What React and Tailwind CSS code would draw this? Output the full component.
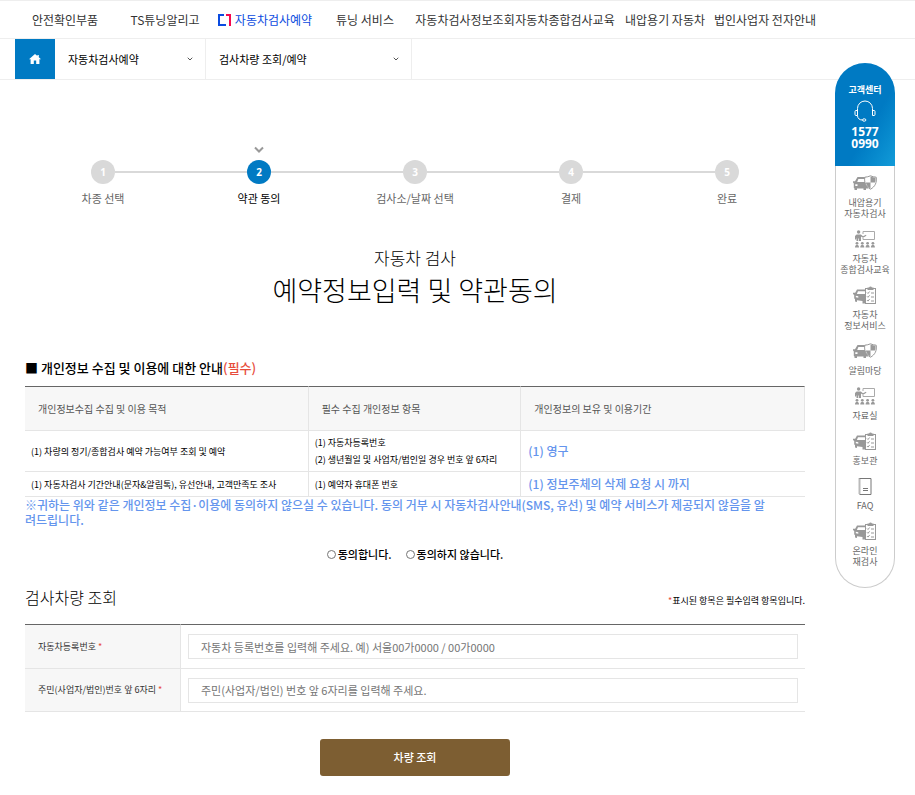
import { useState } from 'react';
import { ChevronDown } from 'lucide-react';

const NAV_ITEMS = [
  '안전확인부품',
  'TS튜닝알리고',
  '자동차검사예약',
  '튜닝 서비스',
  '자동차검사정보조회',
  '자동차종합검사교육',
  '내압용기 자동차',
  '법인사업자 전자안내',
];

const STEPS = ['차종 선택', '약관 동의', '검사소/날짜 선택', '결제', '완료'];

const BracketMark = () => (
  <svg viewBox="0 0 13 12" className="w-[13px] h-3 shrink-0" fill="none" strokeWidth="2">
    <path d="M6 1H1v10h7" stroke="#0a4be0" />
    <path d="M8 1h4v11" stroke="#f5094f" />
  </svg>
);

const HomeIcon = () => (
  <svg viewBox="0 0 12 10" className="w-3 h-2.5" fill="#fff">
    <path d="M6 0 0 5.2h1.6V10h3.2V6.6h2.4V10h3.2V5.2H12L9.8 3.3V1H8.4v1.1z" />
  </svg>
);

const HeadsetIcon = () => (
  <svg viewBox="0 0 22 22" className="w-[22px] h-[22px]" fill="none" stroke="#fff" strokeWidth="1">
    <path d="M3.5 11V8.500a7.500 7.500 0 0 1 15 0V11" />
    <path d="M3.5 10.500H2a1 1 0 0 0-1 1v3a1 1 0 0 0 1 1h1.500zM18.500 10.500H20a1 1 0 0 1 1 1v3a1 1 0 0 1-1 1h-1.500z" />
    <path d="M3.500 15.500c0 3 2 4.500 5 4.500" />
    <ellipse cx="10.200" cy="20" rx="1.700" ry="1.200" />
  </svg>
);

const CarShieldIcon = () => (
  <svg viewBox="0 0 24 16" className="w-6 h-4" fill="#999">
    <path
      fillRule="evenodd"
      d="M4.500 2H14v2H5.400L4.200 7H15v6.500h-2V15h-2.500v-1.500H4V15H1.500v-1.500L.8 13V8.500L0 7.600V6.200h2zM2.300 9.300V11h2.200V9.300z"
    />
    <path
      d="M17.500.8c1.800.9 3.600 1.200 5.700 1.400.9 5.200-1.200 9.600-5.700 12-4.500-2.400-6.600-6.800-5.700-12 2.100-.2 3.900-.5 5.700-1.400z"
      fill="#fff"
      stroke="#999"
    />
    <path d="M17.500 1.500c1.600.8 3.200 1.100 5 1.200.2 1.800.1 3.300-.4 4.700h-4.600zM17.500 7.400v6.100c-2.500-1.500-4.100-3.500-4.700-6.100z" />
  </svg>
);

const LectureIcon = () => (
  <svg viewBox="0 0 20 18" className="w-5 h-[18px]" fill="#999">
    <path d="M8 4V1.500h11.500v8H8V8" fill="none" stroke="#aaa" />
    <circle cx="3.600" cy="2" r="1.700" />
    <path d="M1.600 4.400h4.200L8 6.200l3-1.400.4.900L8 7.800 6 6.500V11H4V8.500h-.7V11H1.500V7.500L1 9.500H0V6z" />
    <circle cx="2" cy="13.300" r="1.400" />
    <circle cx="7.300" cy="13.300" r="1.400" />
    <circle cx="12.600" cy="13.300" r="1.400" />
    <circle cx="17.900" cy="13.300" r="1.400" />
    <path d="M0 17.500c0-1.800.8-2.400 2-2.400s2 .6 2 2.400zM5.300 17.500c0-1.800.8-2.400 2-2.400s2 .6 2 2.400zM10.600 17.500c0-1.800.8-2.400 2-2.400s2 .6 2 2.400zM15.900 17.500c0-1.800.8-2.400 2-2.400s2 .6 2 2.400z" />
  </svg>
);

const CarChecklistIcon = () => (
  <svg viewBox="0 0 24 18" className="w-6 h-[18px]" fill="#999">
    <path
      fillRule="evenodd"
      d="M4 3.500h8v1.700H5L3.900 8H12v9.500H9.500V15L4 14.200V16L2 15.500V13l-.8-.6V9L0 8V6.800h2.200zM2.800 9.700v1.600l2.500.4v-1.500z"
    />
    <rect x="12.500" y="2.500" width="10" height="15" fill="#fff" stroke="#999" />
    <path d="M14.500 1.500H16C16.500.2 18.500.2 19 1.500h1.500V4h-6z" />
    <path
      d="m14 6.500 1 1 1.600-2M14 10.300l1 1 1.600-2M14 14.100l1 1 1.600-2M18 7h3M18 11h3M18 15h3"
      fill="none"
      stroke="#999"
    />
  </svg>
);

const NotebookIcon = () => (
  <svg viewBox="0 0 14 17" className="w-3.5 h-[17px]" fill="none" stroke="#777">
    <path d="M1.500 .5h11.500v16H1.500" />
    <path d="M1.500 .5v16" strokeWidth="2" strokeDasharray="1 1" />
    <path d="M5 10.500h5M5 12.500h5" />
  </svg>
);

const QUICK_LINKS = [
  { icon: CarShieldIcon, lines: ['내압용기', '자동차검사'] },
  { icon: LectureIcon, lines: ['자동차', '종합검사교육'] },
  { icon: CarChecklistIcon, lines: ['자동차', '정보서비스'] },
  { icon: CarShieldIcon, lines: ['알림마당'] },
  { icon: LectureIcon, lines: ['자료실'] },
  { icon: CarChecklistIcon, lines: ['홍보관'] },
  { icon: NotebookIcon, lines: ['FAQ'] },
  { icon: CarChecklistIcon, lines: ['온라인', '재검사'] },
];

const CrumbSelect = ({ label, value, className }) => (
  <div className={`relative border-r border-[#eee] ${className}`}>
    <select
      aria-label={label}
      className="w-full h-10 pl-[13px] pr-8 appearance-none bg-white text-[11px] text-black outline-none"
    >
      <option>{value}</option>
    </select>
    <ChevronDown className="absolute right-[11px] top-4 w-2 h-2 text-[#555] pointer-events-none" strokeWidth={3} />
  </div>
);

const QuickMenu = () => (
  <aside className="absolute right-5 top-[63px] w-[60px] text-center">
    <div className="h-[103px] pt-[21px] flex flex-col items-center rounded-t-[30px] text-white bg-linear-to-br from-[#007ac3] from-60% to-[#129bd8]">
      <span className="text-[9px] leading-3 font-bold">고객센터</span>
      <div className="mt-1">
        <HeadsetIcon />
      </div>
      <strong className="mt-1 text-xs leading-3 font-bold font-['Open_Sans',sans-serif]">
        1577
        <br />
        0990
      </strong>
    </div>
    <ul className="pt-[7px] pb-5 flex flex-col gap-2.5 rounded-b-[30px] border border-t-0 border-[#ccc] bg-white">
      {QUICK_LINKS.map(({ icon: Icon, lines }) => (
        <li key={lines.join(' ')}>
          <a href="#" className="flex flex-col items-center text-[9px] leading-[11px] text-[#666] whitespace-nowrap">
            <span className="h-5 mb-1 flex items-center">
              <Icon />
            </span>
            {lines.map((line) => (
              <span key={line}>{line}</span>
            ))}
          </a>
        </li>
      ))}
    </ul>
  </aside>
);

const StepList = ({ current }) => (
  <ol className="pt-[65px] grid grid-cols-5">
    {STEPS.map((step, i) => {
      const active = i + 1 === current;
      return (
        <li key={step} className="flex flex-col items-center">
          <span className="h-[15px]">
            {active && (
              <svg viewBox="0 0 10 9" className="w-2.5 h-[9px]" fill="none" stroke="#999" strokeWidth="2">
                <path d="m1 2.500 4 4 4-4" />
              </svg>
            )}
          </span>
          <div className="w-full flex items-center">
            <span className={`h-0.5 flex-1 ${i === 0 ? '' : 'bg-[#d9d9d9]'}`} />
            <span
              className={`w-6 h-6 rounded-full flex items-center justify-center text-[10px] font-bold text-white font-['Open_Sans',sans-serif] ${
                active ? 'bg-[#007ac3]' : 'bg-[#d9d9d9]'
              }`}
            >
              {i + 1}
            </span>
            <span className={`h-0.5 flex-1 ${i === STEPS.length - 1 ? '' : 'bg-[#d9d9d9]'}`} />
          </div>
          <span className={`mt-1.5 text-[11px] leading-4 ${active ? 'text-black' : 'text-[#666]'}`}>{step}</span>
        </li>
      );
    })}
  </ol>
);

const ConsentTable = () => (
  <table className="w-full table-fixed border-separate border-spacing-0 text-left text-[9px] leading-[17px] text-black">
    <thead>
      <tr className="h-[45px] bg-[#f7f7f7] text-[10px] text-[#555]">
        <th className="w-4/11 pl-[13px] font-normal border-t border-r border-b border-t-[#666] border-r-[#e5e5e5] border-b-[#e5e5e5]">
          개인정보수집 수집 및 이용 목적
        </th>
        <th className="w-3/11 pl-[13px] font-normal border-t border-r border-b border-t-[#666] border-r-[#e5e5e5] border-b-[#e5e5e5]">
          필수 수집 개인정보 항목
        </th>
        <th className="w-4/11 pl-[13px] font-normal border-t border-r border-b border-t-[#666] border-r-[#e5e5e5] border-b-[#e5e5e5]">
          개인정보의 보유 및 이용기간
        </th>
      </tr>
    </thead>
    <tbody>
      <tr className="h-[41px]">
        <td className="pl-1.5 border-r border-b border-[#e5e5e5]">(1) 차량의 정기/종합검사 예약 가능여부 조회 및 예약</td>
        <td className="pl-1.5 border-r border-b border-[#e5e5e5]">
          (1) 자동차등록번호
          <br />
          (2) 생년월일 및 사업자/법인일 경우 번호 앞 6자리
        </td>
        <td className="pl-[7px] border-b border-[#e5e5e5] text-xs font-medium text-[#6495ed]">(1) 영구</td>
      </tr>
      <tr className="h-[25px]">
        <td className="pl-1.5 border-r border-b border-[#e5e5e5]">
          (1) 자동차검사 기간안내(문자&amp;알림톡), 유선안내, 고객만족도 조사
        </td>
        <td className="pl-1.5 border-r border-b border-[#e5e5e5]">(1) 예약자 휴대폰 번호</td>
        <td className="pl-[7px] border-b border-[#e5e5e5] text-xs font-medium text-[#6495ed]">
          (1) 정보주체의 삭제 요청 시 까지
        </td>
      </tr>
    </tbody>
  </table>
);

const FieldRow = ({ id, label, placeholder, first }) => (
  <tr className={first ? 'h-[45px]' : 'h-[43px]'}>
    <th
      className={`w-1/5 pl-[13px] bg-[#f7f7f7] text-left text-[9px] font-normal text-[#333] whitespace-nowrap border-r border-b border-r-[#e5e5e5] border-b-[#e5e5e5] ${
        first ? 'border-t border-t-[#666]' : ''
      }`}
    >
      <label htmlFor={id}>
        {label} <span className="text-[#e74c3c]">*</span>
      </label>
    </th>
    <td className={`px-[7px] border-b border-b-[#e5e5e5] ${first ? 'border-t border-t-[#666]' : ''}`}>
      <input
        id={id}
        type="text"
        placeholder={placeholder}
        className="block w-full h-[25px] px-3 border border-[#e5e5e5] text-[11px] placeholder:text-[#757575] outline-none"
      />
    </td>
  </tr>
);

export default function App() {
  const [agree, setAgree] = useState('');

  return (
    <div className="relative bg-white text-black font-['Noto_Sans_CJK_KR',sans-serif]">
      <nav className="border-y border-[#eee]">
        <ul className="ml-[15px] mr-[100px] h-[37px] grid grid-cols-8 items-center text-xs text-[#333] whitespace-nowrap">
          {NAV_ITEMS.map((item) => (
            <li key={item} className="flex justify-center">
              {item === '자동차검사예약' ? (
                <a href="#" className="flex items-center gap-1 text-[#0a4be0]">
                  <BracketMark />
                  {item}
                </a>
              ) : (
                <a href="#">{item}</a>
              )}
            </li>
          ))}
        </ul>
      </nav>

      {/* Breadcrumb */}
      <div className="pl-[15px] flex border-b border-[#eee]">
        <a href="#" aria-label="홈" className="w-10 h-10 flex items-center justify-center bg-[#007ac3]">
          <HomeIcon />
        </a>
        <CrumbSelect label="메뉴" value="자동차검사예약" className="w-[151px]" />
        <CrumbSelect label="하위 메뉴" value="검사차량 조회/예약" className="w-[206px]" />
      </div>

      <QuickMenu />

      <main className="ml-[25px] mr-[110px] pb-5">
        <StepList current={2} />

        <h1 className="mt-10 text-center font-light">
          <span className="block text-[17px] leading-6">자동차 검사</span>
          <span className="block text-[27px] leading-10">예약정보입력 및 약관동의</span>
        </h1>

        <h2 className="mt-12 mb-2 text-[13px] leading-5 font-medium">
          ■ 개인정보 수집 및 이용에 대한 안내<span className="text-[#e74c3c]">(필수)</span>
        </h2>
        <ConsentTable />
        <p className="text-xs leading-[15px] font-medium text-[#6495ed]">
          ※귀하는 위와 같은 개인정보 수집·이용에 동의하지 않으실 수 있습니다. 동의 거부 시 자동차검사안내(SMS, 유선) 및 예약 서비스가 제공되지 않음을 알
          <br />
          려드립니다.
        </p>

        <div className="mt-[19px] flex justify-center gap-3.5 text-[11px] leading-4 font-medium">
          {[
            ['yes', '동의합니다.'],
            ['no', '동의하지 않습니다.'],
          ].map(([value, text]) => (
            <label key={value} className="flex items-center gap-0.5">
              <input
                type="radio"
                name="agree"
                value={value}
                checked={agree === value}
                onChange={() => setAgree(value)}
                className="w-[9px] h-[9px] appearance-none rounded-full border border-[#767676] checked:bg-[#007ac3]"
              />
              {text}
            </label>
          ))}
        </div>

        <div className="mt-[23px] mb-[15px] flex items-center justify-between">
          <h2 className="text-base leading-6 font-light">검사차량 조회</h2>
          <p className="pt-2 text-[9px] leading-4">
            <span className="text-[#e74c3c]">*</span>표시된 항목은 필수입력 항목입니다.
          </p>
        </div>
        <form onSubmit={(e) => e.preventDefault()}>
          <table className="w-full table-fixed border-separate border-spacing-0">
            <tbody>
              <FieldRow
                id="carNo"
                label="자동차등록번호"
                placeholder="자동차 등록번호를 입력해 주세요. 예) 서울00가0000 / 00가0000"
                first
              />
              <FieldRow
                id="ownerNo"
                label="주민(사업자/법인)번호 앞 6자리"
                placeholder="주민(사업자/법인) 번호 앞 6자리를 입력해 주세요."
              />
            </tbody>
          </table>
          <button
            type="submit"
            className="mt-[27px] mx-auto block w-[190px] h-[37px] rounded-[3px] bg-[#7d5e32] text-[11px] font-medium text-white"
          >
            차량 조회
          </button>
        </form>
      </main>
    </div>
  );
}
